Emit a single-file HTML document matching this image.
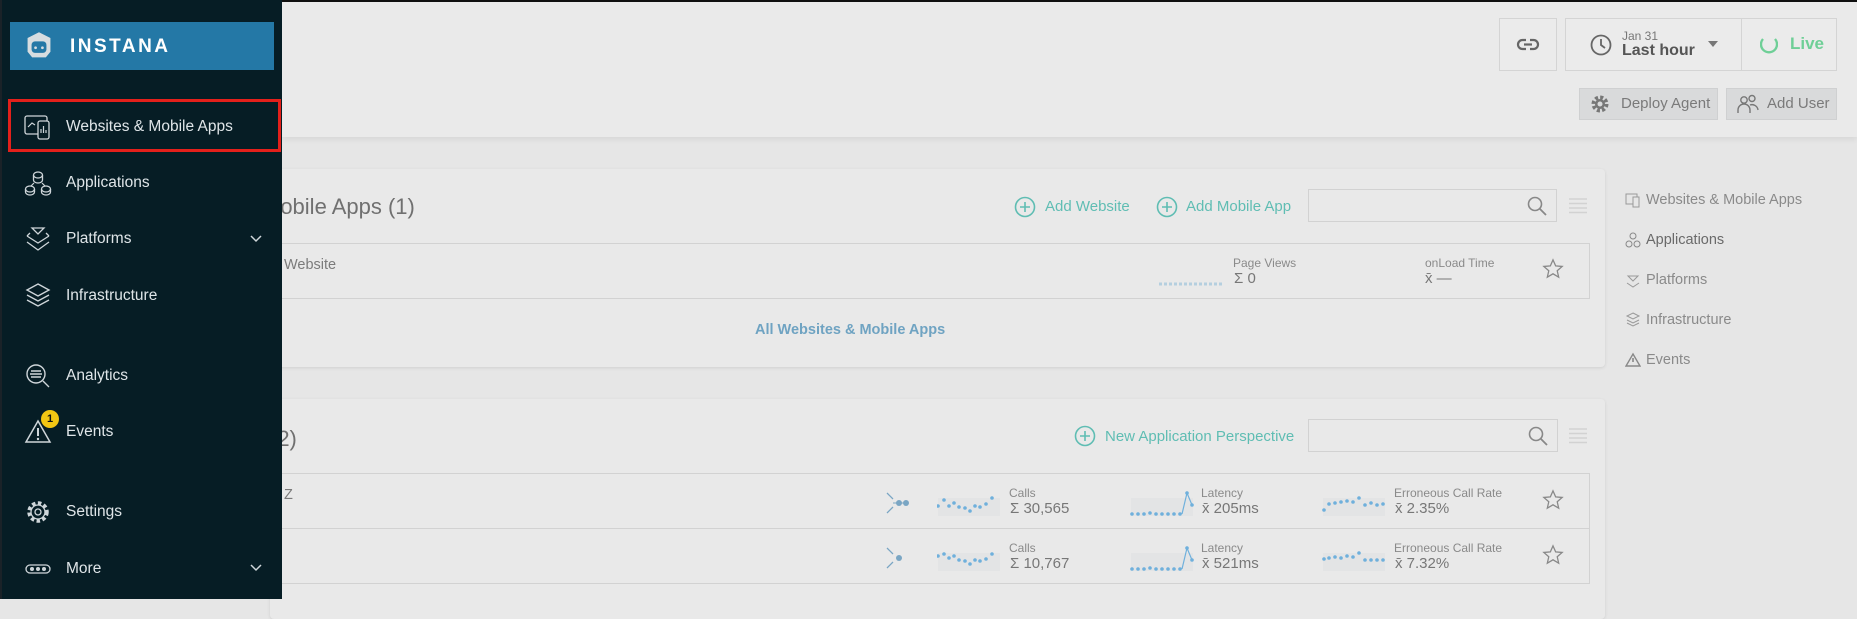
<!DOCTYPE html>
<html><head><meta charset="utf-8"><style>
*{box-sizing:border-box;margin:0;padding:0}
body{width:1857px;height:599px;overflow:hidden;background:#e6e6e6;font-family:"Liberation Sans",sans-serif;position:relative}
.abs{position:absolute}
#top{left:0;top:0;width:1857px;height:2px;background:#111}
#hdr{left:282px;top:2px;width:1575px;height:135px;background:#eaeaea;box-shadow:0 2px 6px rgba(0,0,0,.08)}
#side{left:0;top:0;width:282px;height:599px;background:#061d25;border-left:2px solid #1a2228}
.logo{left:10px;top:22px;width:264px;height:48px;background:#2478a6}
.logo span{position:absolute;left:60px;top:14px;color:#fff;font-weight:bold;font-size:19px;letter-spacing:2.5px}
.red{left:8px;top:99px;width:273px;height:53px;border:3px solid #e3201b}
.nav{left:66px;color:#dfe5e8;font-size:15.5px;transform:translateY(-50%)}
.ico{left:24px;width:28px;height:28px;transform:translateY(-50%)}
.chev{left:250px;transform:translateY(-50%)}
.card{background:#e9e9e9;border-radius:4px;box-shadow:0 1px 3px rgba(0,0,0,.1)}
.g{color:#7b7b7b}
.teal{color:#5fbdb3;font-size:15px}
.lbl{font-size:12px;color:#8a8a8a}
.val{font-size:15px;color:#777}
.box{border:1px solid #d2d2d2}
.btn{border:1px solid #d4d4d4;background:#ebebeb}
.gbtn{background:#d9dadb;border:1px solid #cfd0d1;color:#7a7a7a;font-size:15px}
.rn{left:1646px;font-size:14.5px;color:#8a8a8a;transform:translateY(-50%)}
.ri{left:1625px;transform:translateY(-50%)}
</style></head><body>
<div class="abs" id="top"></div>
<div class="abs" id="hdr"></div>

<div class="abs btn" style="left:1499px;top:18px;width:58px;height:53px"></div>
<svg class="abs" style="left:1516px;top:34px" width="24" height="20" viewBox="0 0 24 20"><rect x="2" y="6" width="20" height="9" rx="4.5" fill="none" stroke="#666" stroke-width="2.2"/><rect x="10" y="4" width="4" height="13" fill="#ebebeb"/><line x1="8" y1="10.5" x2="16" y2="10.5" stroke="#666" stroke-width="2.2"/></svg>
<div class="abs btn" style="left:1565px;top:18px;width:272px;height:53px"></div>
<div class="abs" style="left:1741px;top:18px;width:1px;height:53px;background:#d4d4d4"></div>
<svg class="abs" style="left:1589px;top:33px" width="24" height="24" viewBox="0 0 24 24"><circle cx="12" cy="12" r="9.5" fill="none" stroke="#666" stroke-width="1.8"/><path d="M12 6v6l4 3" fill="none" stroke="#666" stroke-width="1.8"/></svg>
<div class="abs" style="left:1622px;top:29px;font-size:12px;color:#777">Jan 31</div>
<div class="abs" style="left:1622px;top:42px;font-size:16px;color:#555;font-weight:bold">Last hour</div>
<svg class="abs" style="left:1707px;top:40px" width="12" height="8"><path d="M1 1h10L6 7z" fill="#777"/></svg>
<svg class="abs" style="left:1760px;top:34px" width="18" height="20" viewBox="0 0 18 20"><path d="M3 5A8 8 0 1 0 15 5" fill="none" stroke="#6fcf97" stroke-width="2.4"/></svg>
<div class="abs" style="left:1790px;top:34px;font-size:17px;color:#6fcf97;font-weight:bold">Live</div>
<div class="abs gbtn" style="left:1579px;top:88px;width:139px;height:32px"><span class="abs" style="left:41px;top:6px">Deploy Agent</span></div>
<svg class="abs" style="left:1590px;top:94px" width="20" height="20" viewBox="0 0 20 20"><circle cx="10" cy="10" r="6.5" fill="none" stroke="#777" stroke-width="4" stroke-dasharray="3 2.1"/><circle cx="10" cy="10" r="5" fill="#777"/><circle cx="10" cy="10" r="2.5" fill="#d9dadb"/></svg>
<div class="abs gbtn" style="left:1726px;top:88px;width:111px;height:32px"><span class="abs" style="left:40px;top:6px">Add User</span></div>
<svg class="abs" style="left:1737px;top:94px" width="22" height="20" viewBox="0 0 22 20"><circle cx="7" cy="6" r="3.2" fill="none" stroke="#777" stroke-width="1.4"/><circle cx="15" cy="4.5" r="3" fill="none" stroke="#777" stroke-width="1.4"/><path d="M1 19v-3a6 6 0 0 1 12 0v3M13 11a6 6 0 0 1 8 5" fill="none" stroke="#777" stroke-width="1.4"/></svg>

<div class="abs card" style="left:270px;top:169px;width:1335px;height:198px"></div>
<div class="abs g" style="left:262px;top:194px;font-size:22px;color:#707070">Mobile Apps (1)</div>
<svg class="abs" style="left:1014px;top:196px" width="22" height="22"><circle cx="11" cy="11" r="9.5" fill="none" stroke="#5fbdb3" stroke-width="1.6"/><path d="M11 6v10M6 11h10" stroke="#5fbdb3" stroke-width="1.6"/></svg>
<div class="abs teal" style="left:1045px;top:198px">Add Website</div>
<svg class="abs" style="left:1156px;top:196px" width="22" height="22"><circle cx="11" cy="11" r="9.5" fill="none" stroke="#5fbdb3" stroke-width="1.6"/><path d="M11 6v10M6 11h10" stroke="#5fbdb3" stroke-width="1.6"/></svg>
<div class="abs teal" style="left:1186px;top:198px">Add Mobile App</div>
<div class="abs box" style="left:1308px;top:189px;width:249px;height:33px"></div>
<svg class="abs" style="left:1526px;top:195px" width="22" height="22"><circle cx="9" cy="9" r="6.5" fill="none" stroke="#888" stroke-width="1.6"/><path d="M14 14l6 6" stroke="#888" stroke-width="1.8"/></svg>
<svg class="abs" style="left:1569px;top:198px" width="18" height="16"><path d="M0 1h18M0 5.5h18M0 10h18M0 14.5h18" stroke="#d2d2d2" stroke-width="1.4"/></svg>
<div class="abs box" style="left:270px;top:243px;width:1320px;height:56px"></div>
<div class="abs g" style="left:284px;top:257px;font-size:14.5px">Website</div>
<svg class="abs" style="left:1157px;top:280px" width="68" height="8"><path d="M2 4H66" stroke="#b5cfdf" stroke-width="3" stroke-dasharray="3 2"/></svg>
<div class="abs lbl" style="left:1233px;top:256px">Page Views</div>
<div class="abs val" style="left:1234px;top:270px">Σ 0</div>
<div class="abs lbl" style="left:1425px;top:256px">onLoad Time</div>
<div class="abs val" style="left:1425px;top:270px">x̄ —</div>
<svg class="abs" style="left:1542px;top:258px" width="22" height="22" viewBox="0 0 24 24"><path d="M12 2l2.9 6.6 7.1.6-5.4 4.7 1.6 7L12 17.2 5.8 20.9l1.6-7L2 9.2l7.1-.6z" fill="none" stroke="#888" stroke-width="1.4"/></svg>
<div class="abs" style="left:755px;top:322px;font-size:14.5px;color:#6fa3c2;font-weight:bold">All Websites &amp; Mobile Apps</div>

<div class="abs rn" style="top:200px">Websites &amp; Mobile Apps</div>
<div class="abs rn" style="top:240px;color:#6a6a6a">Applications</div>
<div class="abs rn" style="top:280px">Platforms</div>
<div class="abs rn" style="top:320px">Infrastructure</div>
<div class="abs rn" style="top:360px">Events</div>
<svg class="abs ri" style="top:200px" width="16" height="16"><rect x="1" y="2" width="11" height="10" fill="none" stroke="#999"/><rect x="8" y="5" width="6" height="10" fill="#e6e6e6" stroke="#999"/></svg>
<svg class="abs ri" style="top:240px" width="16" height="16"><circle cx="8" cy="4" r="3" fill="none" stroke="#888"/><circle cx="4" cy="12" r="3" fill="none" stroke="#888"/><circle cx="12" cy="12" r="3" fill="none" stroke="#888"/></svg>
<svg class="abs ri" style="top:280px" width="16" height="16"><path d="M3 4h10L8 9zM2 11l6 4 6-4" fill="none" stroke="#999"/></svg>
<svg class="abs ri" style="top:320px" width="16" height="16"><path d="M8 1l6 3-6 3-6-3zM2 8l6 3 6-3M2 11l6 3 6-3" fill="none" stroke="#999"/></svg>
<svg class="abs ri" style="top:360px" width="16" height="16"><path d="M8 2l7 12H1z" fill="none" stroke="#888" stroke-width="1.4"/><path d="M8 6v4" stroke="#888" stroke-width="1.6"/></svg>

<div class="abs card" style="left:270px;top:399px;width:1335px;height:220px"></div>
<div class="abs g" style="left:270px;top:426px;font-size:22px;color:#707070">(2)</div>
<svg class="abs" style="left:1074px;top:425px" width="22" height="22"><circle cx="11" cy="11" r="9.5" fill="none" stroke="#5fbdb3" stroke-width="1.6"/><path d="M11 6v10M6 11h10" stroke="#5fbdb3" stroke-width="1.6"/></svg>
<div class="abs teal" style="left:1105px;top:428px">New Application Perspective</div>
<div class="abs box" style="left:1308px;top:419px;width:250px;height:33px"></div>
<svg class="abs" style="left:1527px;top:425px" width="22" height="22"><circle cx="9" cy="9" r="6.5" fill="none" stroke="#888" stroke-width="1.6"/><path d="M14 14l6 6" stroke="#888" stroke-width="1.8"/></svg>
<svg class="abs" style="left:1569px;top:428px" width="18" height="16"><path d="M0 1h18M0 5.5h18M0 10h18M0 14.5h18" stroke="#d2d2d2" stroke-width="1.4"/></svg>
<div class="abs box" style="left:270px;top:473px;width:1320px;height:56px"></div>
<div class="abs box" style="left:270px;top:528px;width:1320px;height:56px"></div>
<div class="abs g" style="left:284px;top:487px;font-size:14.5px">Z</div>

<svg class="abs" style="left:884px;top:490px" width="30" height="26"><path d="M3 3l6 6M3 23l6-6" stroke="#7aa6c4" stroke-width="1.3"/><circle cx="15" cy="13" r="3" fill="#7aa6c4"/><circle cx="22" cy="13" r="3" fill="#7aa6c4"/><path d="M9 13h13" stroke="#7aa6c4"/></svg>
<svg class="abs" style="left:884px;top:545px" width="30" height="26"><path d="M3 3l6 6M3 23l6-6" stroke="#7aa6c4" stroke-width="1.3"/><circle cx="15" cy="13" r="3" fill="#7aa6c4"/></svg>

<svg class="abs" style="left:937px;top:490px" width="64" height="28"><rect x="1" y="8" width="62" height="18" fill="#e3e4e5"/><g fill="#6fb0dc"><circle cx="1" cy="16" r="1.8"/><circle cx="7" cy="10" r="1.8"/><circle cx="12" cy="16" r="1.8"/><circle cx="17" cy="13" r="1.8"/><circle cx="22" cy="17" r="1.8"/><circle cx="28" cy="18" r="1.8"/><circle cx="33" cy="21" r="1.8"/><circle cx="38" cy="16" r="1.8"/><circle cx="43" cy="17" r="1.8"/><circle cx="49" cy="14" r="1.8"/><circle cx="55" cy="8" r="1.8"/></g></svg>
<svg class="abs" style="left:937px;top:545px" width="64" height="28"><rect x="1" y="8" width="62" height="18" fill="#e3e4e5"/><g fill="#6fb0dc"><circle cx="1" cy="11" r="1.8"/><circle cx="7" cy="9" r="1.8"/><circle cx="12" cy="13" r="1.8"/><circle cx="17" cy="11" r="1.8"/><circle cx="22" cy="15" r="1.8"/><circle cx="28" cy="16" r="1.8"/><circle cx="33" cy="19" r="1.8"/><circle cx="38" cy="15" r="1.8"/><circle cx="43" cy="16" r="1.8"/><circle cx="49" cy="14" r="1.8"/><circle cx="55" cy="9" r="1.8"/></g></svg>
<div class="abs lbl" style="left:1009px;top:486px">Calls</div>
<div class="abs val" style="left:1010px;top:500px">Σ 30,565</div>
<div class="abs lbl" style="left:1009px;top:541px">Calls</div>
<div class="abs val" style="left:1010px;top:555px">Σ 10,767</div>

<svg class="abs" style="left:1130px;top:490px" width="64" height="28"><rect x="1" y="8" width="62" height="18" fill="#e3e4e5"/><path d="M52 24l5-21 5 12" fill="none" stroke="#6fb0dc" stroke-width="1.2"/><g fill="#6fb0dc"><circle cx="2" cy="24" r="1.8"/><circle cx="8" cy="24" r="1.8"/><circle cx="14" cy="24" r="1.8"/><circle cx="20" cy="23" r="1.8"/><circle cx="26" cy="24" r="1.8"/><circle cx="32" cy="24" r="1.8"/><circle cx="38" cy="24" r="1.8"/><circle cx="44" cy="24" r="1.8"/><circle cx="50" cy="24" r="1.8"/><circle cx="57" cy="3" r="1.8"/><circle cx="62" cy="15" r="1.8"/></g></svg>
<svg class="abs" style="left:1130px;top:545px" width="64" height="28"><rect x="1" y="8" width="62" height="18" fill="#e3e4e5"/><path d="M52 24l5-21 5 12" fill="none" stroke="#6fb0dc" stroke-width="1.2"/><g fill="#6fb0dc"><circle cx="2" cy="24" r="1.8"/><circle cx="8" cy="24" r="1.8"/><circle cx="14" cy="24" r="1.8"/><circle cx="20" cy="23" r="1.8"/><circle cx="26" cy="24" r="1.8"/><circle cx="32" cy="24" r="1.8"/><circle cx="38" cy="24" r="1.8"/><circle cx="44" cy="24" r="1.8"/><circle cx="50" cy="24" r="1.8"/><circle cx="57" cy="3" r="1.8"/><circle cx="62" cy="15" r="1.8"/></g></svg>
<div class="abs lbl" style="left:1201px;top:486px">Latency</div>
<div class="abs val" style="left:1202px;top:500px">x̄ 205ms</div>
<div class="abs lbl" style="left:1201px;top:541px">Latency</div>
<div class="abs val" style="left:1202px;top:555px">x̄ 521ms</div>

<svg class="abs" style="left:1322px;top:490px" width="64" height="28"><rect x="1" y="8" width="62" height="18" fill="#e3e4e5"/><g fill="#6fb0dc"><circle cx="2" cy="20" r="1.8"/><circle cx="7" cy="14" r="1.8"/><circle cx="13" cy="13" r="1.8"/><circle cx="19" cy="12" r="1.8"/><circle cx="25" cy="11" r="1.8"/><circle cx="31" cy="12" r="1.8"/><circle cx="37" cy="8" r="1.8"/><circle cx="43" cy="15" r="1.8"/><circle cx="49" cy="13" r="1.8"/><circle cx="55" cy="15" r="1.8"/><circle cx="61" cy="14" r="1.8"/></g></svg>
<svg class="abs" style="left:1322px;top:545px" width="64" height="28"><rect x="1" y="8" width="62" height="18" fill="#e3e4e5"/><g fill="#6fb0dc"><circle cx="2" cy="14" r="1.8"/><circle cx="7" cy="13" r="1.8"/><circle cx="13" cy="12" r="1.8"/><circle cx="19" cy="13" r="1.8"/><circle cx="25" cy="11" r="1.8"/><circle cx="31" cy="12" r="1.8"/><circle cx="37" cy="8" r="1.8"/><circle cx="43" cy="15" r="1.8"/><circle cx="49" cy="15" r="1.8"/><circle cx="55" cy="15" r="1.8"/><circle cx="61" cy="15" r="1.8"/></g></svg>
<div class="abs lbl" style="left:1394px;top:486px">Erroneous Call Rate</div>
<div class="abs val" style="left:1395px;top:500px">x̄ 2.35%</div>
<div class="abs lbl" style="left:1394px;top:541px">Erroneous Call Rate</div>
<div class="abs val" style="left:1395px;top:555px">x̄ 7.32%</div>
<svg class="abs" style="left:1542px;top:489px" width="22" height="22" viewBox="0 0 24 24"><path d="M12 2l2.9 6.6 7.1.6-5.4 4.7 1.6 7L12 17.2 5.8 20.9l1.6-7L2 9.2l7.1-.6z" fill="none" stroke="#888" stroke-width="1.4"/></svg>
<svg class="abs" style="left:1542px;top:544px" width="22" height="22" viewBox="0 0 24 24"><path d="M12 2l2.9 6.6 7.1.6-5.4 4.7 1.6 7L12 17.2 5.8 20.9l1.6-7L2 9.2l7.1-.6z" fill="none" stroke="#888" stroke-width="1.4"/></svg>

<div class="abs" id="side"></div>
<div class="abs logo"><svg class="abs" style="left:13px;top:8px" width="32" height="32" viewBox="0 0 28 28"><path d="M14 2l10 5v12l-4 5H8l-4-5V7z" fill="#d7dde0"/><rect x="7.5" y="10" width="13" height="10" rx="3" fill="#2478a6"/><circle cx="11" cy="15.5" r="1.2" fill="#d7dde0"/><circle cx="17" cy="15.5" r="1.2" fill="#d7dde0"/></svg><span>INSTANA</span></div>
<div class="abs red"></div>

<svg class="abs ico" style="top:127px" viewBox="0 0 28 28"><rect x="1" y="3" width="22" height="18" rx="2" fill="none" stroke="#cfd6da" stroke-width="1.3"/><path d="M4 14l4-4 3 2" fill="none" stroke="#cfd6da" stroke-width="1.2"/><rect x="14" y="8" width="11" height="18" rx="2" fill="#061d25" stroke="#cfd6da" stroke-width="1.3"/><path d="M17 20v-4M19.5 20v-7M22 20v-3" stroke="#cfd6da" stroke-width="1.2"/></svg>
<div class="abs nav" style="top:127px">Websites &amp; Mobile Apps</div>
<svg class="abs ico" style="top:183px" viewBox="0 0 28 28"><ellipse cx="14" cy="6" rx="4.5" ry="3" fill="none" stroke="#cfd6da" stroke-width="1.3"/><path d="M9.5 6v5a4.5 3 0 0 0 9 0V6" fill="none" stroke="#cfd6da" stroke-width="1.3"/><ellipse cx="6" cy="20" rx="4.5" ry="3" fill="none" stroke="#cfd6da" stroke-width="1.3"/><path d="M1.5 20v3a4.5 3 0 0 0 9 0v-3" fill="none" stroke="#cfd6da" stroke-width="1.3"/><ellipse cx="22" cy="20" rx="4.5" ry="3" fill="none" stroke="#cfd6da" stroke-width="1.3"/><path d="M17.5 20v3a4.5 3 0 0 0 9 0v-3" fill="none" stroke="#cfd6da" stroke-width="1.3"/><path d="M10 14l-3 3M18 14l3 3" stroke="#cfd6da" stroke-width="1.2"/></svg>
<div class="abs nav" style="top:183px">Applications</div>
<svg class="abs ico" style="top:239px" viewBox="0 0 28 28"><path d="M8 3h12l-6 6zM3 11l11 7 11-7M3 17l11 8 11-8M3 11l3-3M25 11l-3-3" fill="none" stroke="#cfd6da" stroke-width="1.3"/></svg>
<div class="abs nav" style="top:239px">Platforms</div>
<svg class="abs chev" style="top:239px" width="12" height="8"><path d="M1 1l5 5 5-5" fill="none" stroke="#cfd6da" stroke-width="1.5"/></svg>
<svg class="abs ico" style="top:296px" viewBox="0 0 28 28"><path d="M14 2l11 6-11 6-11-6zM3 13l11 6 11-6M3 18l11 6 11-6" fill="none" stroke="#cfd6da" stroke-width="1.4"/></svg>
<div class="abs nav" style="top:296px">Infrastructure</div>
<svg class="abs ico" style="top:376px" viewBox="0 0 28 28"><circle cx="12" cy="12" r="9" fill="none" stroke="#cfd6da" stroke-width="1.4"/><path d="M7 9h10M6 12h12M7 15h10M19 19l6 6" stroke="#cfd6da" stroke-width="1.4"/></svg>
<div class="abs nav" style="top:376px">Analytics</div>
<svg class="abs ico" style="top:432px" viewBox="0 0 28 28"><path d="M14 3l12 21H2z" fill="none" stroke="#cfd6da" stroke-width="1.5"/><path d="M14 10v8" stroke="#cfd6da" stroke-width="2"/><circle cx="14" cy="21" r="1.2" fill="#cfd6da"/></svg>
<div class="abs" style="left:41px;top:410px;width:18px;height:18px;border-radius:50%;background:#f2c613;color:#111;font-size:11px;font-weight:bold;text-align:center;line-height:18px">1</div>
<div class="abs nav" style="top:432px">Events</div>
<svg class="abs ico" style="top:512px" viewBox="0 0 28 28"><circle cx="14" cy="14" r="9" fill="none" stroke="#cfd6da" stroke-width="3.5" stroke-dasharray="3.5 2.5"/><circle cx="14" cy="14" r="7" fill="none" stroke="#cfd6da" stroke-width="1.3"/><circle cx="14" cy="14" r="3" fill="none" stroke="#cfd6da" stroke-width="1.3"/></svg>
<div class="abs nav" style="top:512px">Settings</div>
<svg class="abs ico" style="top:569px" viewBox="0 0 28 28"><rect x="2" y="10" width="24" height="8" rx="4" fill="none" stroke="#cfd6da" stroke-width="1.3"/><circle cx="8" cy="14" r="2" fill="#cfd6da"/><circle cx="14" cy="14" r="2" fill="#cfd6da"/><circle cx="20" cy="14" r="2" fill="#cfd6da"/></svg>
<div class="abs nav" style="top:569px">More</div>
<svg class="abs chev" style="top:568px" width="12" height="8"><path d="M1 1l5 5 5-5" fill="none" stroke="#cfd6da" stroke-width="1.5"/></svg>
</body></html>
